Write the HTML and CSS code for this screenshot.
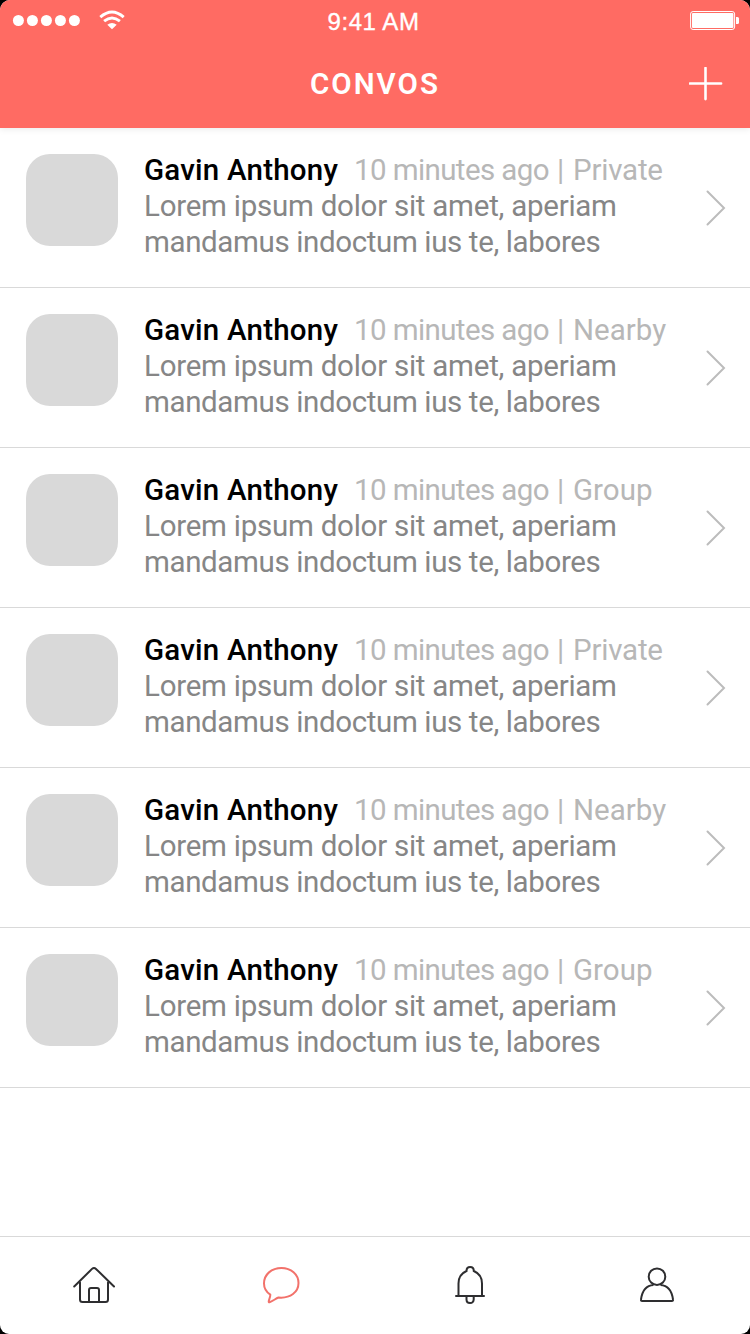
FILE: index.html
```html
<!DOCTYPE html>
<html lang="en">
<head>
<meta charset="utf-8">
<title>Convos</title>
<link rel="stylesheet" href="styles.css">
</head>
<body>
<div class="screen">
  <header class="header">
    <div class="status">
      <svg class="signal" width="126" height="40" viewBox="0 0 126 40">
        <g fill="#fff"><circle cx="18.4" cy="20.5" r="5.5"/><circle cx="32.4" cy="20.5" r="5.5"/><circle cx="46.4" cy="20.5" r="5.5"/><circle cx="60.4" cy="20.5" r="5.5"/><circle cx="74.4" cy="20.5" r="5.5"/><path d="M107.3 24.8Q112 21.2 116.7 24.8L112 29.2Z"/></g>
        <path d="M100.3 17.1Q112 6.900 123.7 17.1M104.1 21.2Q112 14.600 119.900 21.2" fill="none" stroke="#fff" stroke-width="2.9"/>
      </svg>
      <span class="time">9:41 AM</span>
      <svg class="battery" width="60" height="40" viewBox="0 0 60 40">
        <rect x="0.6" y="11.5" width="44" height="18" rx="2.5" fill="none" stroke="#fff" stroke-width="1"/>
        <rect x="2" y="13" width="41.4" height="15" rx="1" fill="#fff"/>
        <path d="M46 17h1.500q1.500 0 1.500 1.500v4q0 1.500-1.500 1.500H46z" fill="#fff"/>
      </svg>
    </div>
    <div class="navbar">
      <h1 class="title">CONVOS</h1>
      <svg class="add" width="34" height="34" viewBox="0 0 34 34"><path d="M16.500 0.900V32.100M0.900 16.500H32.100" stroke="#fff" stroke-width="2.600" stroke-linecap="round"/></svg>
    </div>
  </header>
  <main class="list" id="list"></main>
  <nav class="tabs">
    <svg class="tab" viewBox="0 0 70 70"><g fill="none" stroke="#2e2e30" stroke-width="2" stroke-linejoin="round" stroke-linecap="round"><path d="M14.200 36.500L32 18.900Q34 17 36 18.900L54 36.500"/><path d="M20 32.500V49.500Q20 52 22.500 52H45.500Q48 52 48 49.500V32.500"/><path d="M29 52V40Q29 38 31 38H37Q39 38 39 40V52"/></g></svg>
    <svg class="tab" viewBox="0 0 70 70"><path d="M20.300 44.700C16 41.800 14 38 14 33.500C14 24.500 21.500 18 31.500 18C41 18 48.500 24.500 48.500 33C48.500 42 40.500 48.600 28.500 47.500C25.500 48.800 22 51.500 19.500 52.200C17.300 52.500 20.500 47.500 20.300 44.700Z" fill="none" stroke="#f2726b" stroke-width="2" stroke-linejoin="round"/></svg>
    <svg class="tab" viewBox="0 0 70 70"><g fill="none" stroke="#2e2e30" stroke-width="2" stroke-linecap="round"><path d="M21 46H49"/><path d="M23.500 45.500V33.500Q23.500 24.500 31.500 21C31.500 15.600 38.800 15.600 38.800 21Q47 24.500 47 33.500V45.500"/><path d="M31.500 47V49.500Q31.500 53 35 53T38.700 49.500V47"/></g></svg>
    <svg class="tab" viewBox="0 0 70 70"><g fill="none" stroke="#2e2e30" stroke-width="2" stroke-linejoin="round"><circle cx="32" cy="26.700" r="8.300"/><path d="M28.500 35C20.500 35.500 17 42 16 49.500Q15.600 51 17.200 51H46.800Q48.400 51 48 49.500C47 42 43.500 35.500 35.500 35"/></g></svg>
  </nav>
</div>
<script src="list.js"></script>
</body>
</html>
```
FILE: list.js
```js
const kinds = ["Private", "Nearby", "Group", "Private", "Nearby", "Group"];
document.getElementById("list").innerHTML = kinds.map(kind => `
  <article class="row">
    <div class="avatar"></div>
    <div class="body">
      <div class="heading"><span class="name">Gavin Anthony</span><span class="ago">10 minutes ago</span><span class="bar">|</span><span class="kind ${kind.toLowerCase()}">${kind}</span></div>
      <div class="message first">Lorem ipsum dolor sit amet, aperiam</div>
      <div class="message second">mandamus indoctum ius te, labores</div>
    </div>
    <svg class="chevron" width="20" height="36" viewBox="0 0 20 36"><path d="M1.500 1.500L18 18L1.500 34.500" fill="none" stroke="#bcbcbc" stroke-width="2" stroke-linecap="round"/></svg>
  </article>`).join("");
```
FILE: styles.css
```css
* { box-sizing: border-box; }
body { margin: 0; background: #000; font-family: Roboto, "Liberation Sans", sans-serif; }
.screen { width: 750px; height: 1334px; display: flex; flex-direction: column; background: #fff; border-radius: 10px 10px 9px 9px; overflow: hidden; }
.header { height: 128px; flex: none; background: #ff6b63; color: #fff; box-shadow: 0 1px 7px rgba(0, 0, 0, .09); }
.status { height: 40px; display: grid; grid-template-columns: 126px 1fr 60px; align-items: center; }
.time { text-align: center; padding: 3px 69px 0 0; font: 24px/30px "Liberation Sans", sans-serif; letter-spacing: .55px; -webkit-text-stroke: .35px #fff; white-space: nowrap; }
.navbar { height: 88px; display: grid; grid-template-columns: 1fr auto 1fr; align-items: center; }
.title { grid-column: 2; margin: -1px 0 0; font-size: 29.500px; font-weight: 600; line-height: 40px; letter-spacing: 2px; }
.add { justify-self: end; margin-right: 27px; }
.list { flex: 1; }
.row { height: 160px; padding: 26px 24px 0 26px; display: flex; border-bottom: 1px solid #d9d9d9; }
.avatar { width: 92px; height: 92px; border-radius: 24px; background: #d9d9d9; flex: none; }
.body { margin: -2px 0 0 26px; width: 540px; font-size: 29.500px; line-height: 36px; color: #868686; white-space: nowrap; }
.heading { display: flex; height: 36px; color: #b7b7b7; }
.name { width: 210px; color: #000; font-weight: 500; letter-spacing: .22px; }
.ago { width: 203px; letter-spacing: -.6px; }
.bar { width: 16px; }
.private { letter-spacing: -.2px; }
.first { letter-spacing: -.25px; }
.second { letter-spacing: -.37px; }
.chevron { margin: 36px 0 0 auto; }
.tabs { height: 98px; flex: none; border-top: 1px solid #d9d9d9; display: grid; grid-template-columns: 190px 185px 190px 185px; padding: 13px 0 0; }
.tab { width: 70px; height: 70px; margin-left: 60px; }
```
